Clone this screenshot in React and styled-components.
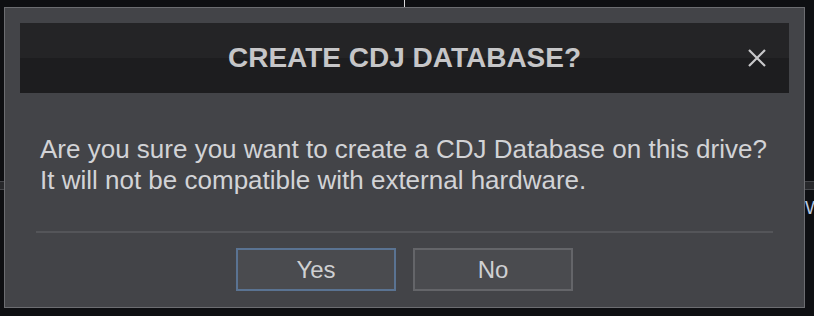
import React from "react";
import styled, { createGlobalStyle } from "styled-components";

const Global = createGlobalStyle`
  html, body { margin: 0; padding: 0; background: #0e0f12; }
  body { width: 814px; height: 316px; overflow: hidden; font-family: "Liberation Sans", Arial, sans-serif; }
`;

const Page = styled.div`
  position: relative;
  width: 814px;
  height: 316px;
  background: #0e0f12;
  display: flex;
  flex-direction: column;
  overflow: hidden;
`;

const TopStrip = styled.div`
  height: 7px;
  display: flex;
  justify-content: center;
`;

const Tick = styled.div`
  width: 1px;
  height: 7px;
  margin-left: -5px;
  background: #d8d8da;
`;

const Spacer = styled.div`
  height: ${(p) => p.$h}px;
`;

const BgRow = styled.div`
  height: 7px;
  border-top: 1px solid #45464a;
  border-bottom: 1px solid #45464a;
  background: #27282b;
`;

const BgLabel = styled.div`
  display: flex;
  justify-content: flex-end;
  padding-top: 8px;
  font-size: 19px;
  line-height: 19px;
  color: #b8c8e0;
  margin-right: -9px;
`;

const Dialog = styled.div`
  position: absolute;
  left: 4px;
  top: 7px;
  box-sizing: border-box;
  width: 801px;
  height: 301px;
  border: 1px solid #6c6d71;
  background: #434448;
  padding: 15px;
  display: flex;
  flex-direction: column;
`;

const Header = styled.div`
  position: relative;
  height: 70px;
  flex: none;
  background: linear-gradient(#242426 0 50%, #1d1d1f 50% 100%);
  display: flex;
  align-items: center;
  justify-content: center;
`;

const Title = styled.h1`
  margin: 0;
  font-size: 28px;
  font-weight: 700;
  color: #c6c6c8;
`;

const CloseButton = styled.button`
  position: absolute;
  right: 22px;
  top: 25px;
  width: 20px;
  height: 20px;
  padding: 0;
  border: 0;
  background: none;
  display: flex;
  align-items: center;
  justify-content: center;
  cursor: pointer;
`;

const Body = styled.div`
  box-sizing: border-box;
  height: 138px;
  flex: none;
  padding: 41px 20px 0 20px;
  font-size: 26px;
  line-height: 31px;
  color: #d2d3d6;
`;

const Separator = styled.div`
  height: 2px;
  margin: 0 16px;
  background: #545559;
  flex: none;
`;

const Buttons = styled.div`
  display: flex;
  justify-content: center;
  gap: 17px;
  margin-top: 15px;
`;

const Button = styled.button`
  width: 160px;
  height: 43px;
  box-sizing: border-box;
  background: #4a4b4f;
  border: 2px solid ${(p) => (p.$primary ? "#5a7392" : "#646569")};
  color: #cfd0d2;
  font-family: "Liberation Sans", Arial, sans-serif;
  font-size: 24px;
  padding: 0;
  cursor: pointer;
`;

export default function App() {
  return (
    <>
      <Global />
      <Page>
        <TopStrip>
          <Tick />
        </TopStrip>
        <Spacer $h={174} />
        <BgRow />
        <BgLabel>W</BgLabel>
        <Dialog role="dialog">
          <Header>
            <Title>CREATE CDJ DATABASE?</Title>
            <CloseButton aria-label="Close">
              <svg width="20" height="20" viewBox="0 0 20 20">
                <path d="M2 2 L18 18 M18 2 L2 18" stroke="#c8c8ca" strokeWidth="2.2" />
              </svg>
            </CloseButton>
          </Header>
          <Body>
            Are you sure you want to create a CDJ Database on this drive?
            <br />
            It will not be compatible with external hardware.
          </Body>
          <Separator />
          <Buttons>
            <Button $primary>Yes</Button>
            <Button>No</Button>
          </Buttons>
        </Dialog>
      </Page>
    </>
  );
}
